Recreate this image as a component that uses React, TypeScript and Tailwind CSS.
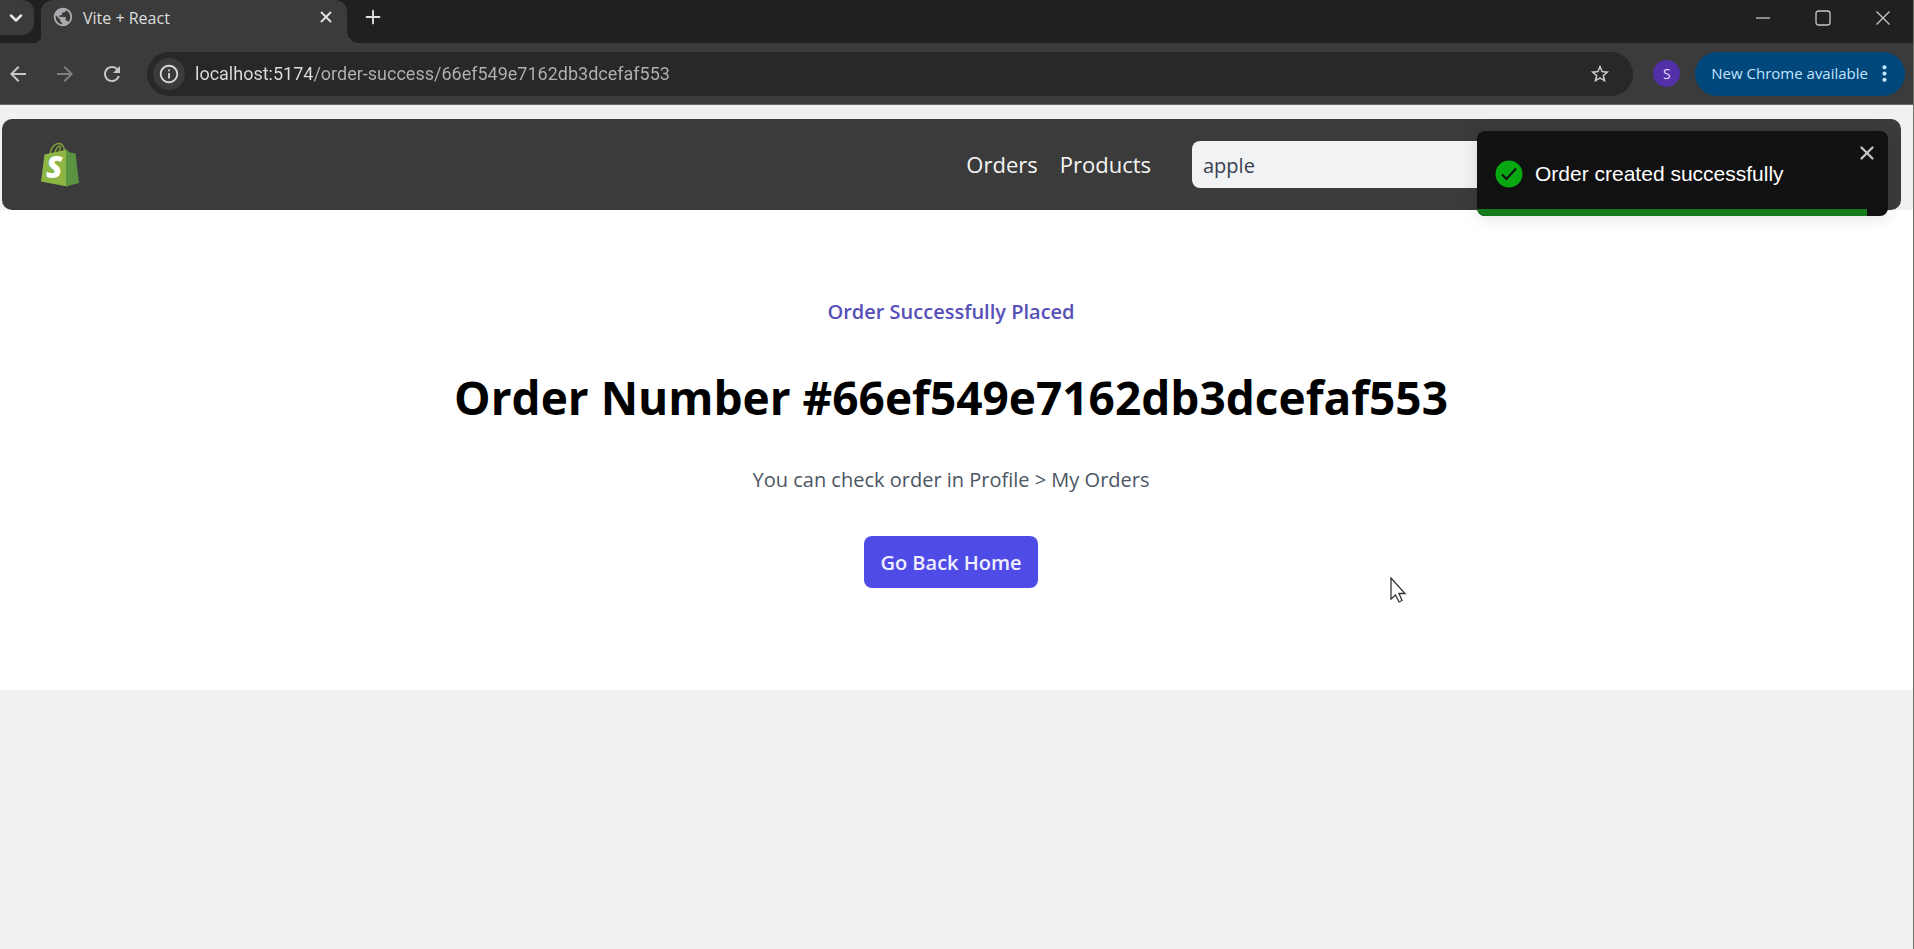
import { useState } from "react";
import { ChevronDown, Plus, X } from "lucide-react";
import {
  MdPublic,
  MdArrowBack,
  MdArrowForward,
  MdRefresh,
  MdInfoOutline,
  MdStarOutline,
  MdMoreVert,
} from "react-icons/md";

const ORDER_ID = "66ef549e7162db3dcefaf553";

function TabStrip() {
  return (
    <div className="flex h-[43px] items-stretch bg-[#1f201f]">
      <button
        aria-label="Search tabs"
        className="flex h-[35px] w-[34px] items-center justify-center rounded-br-[12px] rounded-tr-[12px] bg-[#3b3b3b] pr-[3px] text-[#e3e3e3]"
      >
        <ChevronDown className="size-[20px]" strokeWidth={3} />
      </button>
      <div className="w-[7px] bg-[radial-gradient(circle_at_0_0,#1f201f_7px,#3b3b3b_7px)] bg-[length:7px_7px] bg-bottom bg-no-repeat" />
      <div className="flex w-[306px] items-start rounded-t-[12px] bg-[#3b3b3b] pl-[11px] pr-[12px] pt-[6px]">
        <MdPublic className="size-[22px] text-[#a9abae]" />
        <span className="ml-[9px] flex-1 text-[16px] leading-[24px] text-[#dedede]">Vite + React</span>
        <button aria-label="Close tab" className="mt-[2px] text-[#e3e3e3]">
          <X className="size-[18px]" strokeWidth={2.5} />
        </button>
      </div>
      <div className="w-[12px] bg-[radial-gradient(circle_at_100%_0,#1f201f_12px,#3b3b3b_12px)] bg-[length:12px_12px] bg-bottom bg-no-repeat" />
      <button aria-label="New tab" className="ml-[3px] mt-[6px] self-start text-[#e3e3e3]">
        <Plus className="size-[22px]" strokeWidth={2} />
      </button>
      <div className="ml-auto flex h-[35px] items-center gap-[44px] pr-[22px] text-[#c8c8c8]">
        <button aria-label="Minimize">
          <svg className="size-[16px]" viewBox="0 0 16 16" stroke="currentColor" strokeWidth="1.3" fill="none">
            <path d="M1 8h14" />
          </svg>
        </button>
        <button aria-label="Maximize">
          <svg className="size-[16px]" viewBox="0 0 16 16" stroke="currentColor" strokeWidth="1.3" fill="none">
            <rect x="1" y="1" width="14" height="14" rx="2.5" />
          </svg>
        </button>
        <button aria-label="Close window">
          <svg className="size-[16px]" viewBox="0 0 16 16" stroke="currentColor" strokeWidth="1.3" fill="none">
            <path d="M1.5 1.5l13 13M14.5 1.5l-13 13" />
          </svg>
        </button>
      </div>
    </div>
  );
}

function Toolbar() {
  return (
    <div className="flex h-[62px] items-center border-b border-[#6a6a6a] bg-[#3b3b3b] pl-[6px] pr-[8px]">
      <button aria-label="Back" className="text-[#c7c7c7]">
        <MdArrowBack className="size-[24px]" />
      </button>
      <button aria-label="Forward" className="ml-[23px] text-[#7e7e7e]">
        <MdArrowForward className="size-[24px]" />
      </button>
      <button aria-label="Reload" className="ml-[23px] text-[#c7c7c7]">
        <MdRefresh className="size-[24px]" />
      </button>
      <div className="ml-[23px] flex h-[44px] flex-1 items-center rounded-full bg-[#282828] pl-[6px] pr-[22px]">
        <button aria-label="Site information" className="flex size-[32px] items-center justify-center rounded-full bg-[#3b3b3b] text-[#d8d8d8]">
          <MdInfoOutline className="size-[22px]" />
        </button>
        <input
          aria-label="Address"
          readOnly
          value={"localhost:5174/order-success/" + ORDER_ID}
          className="ml-[10px] min-w-0 flex-1 bg-[linear-gradient(90deg,#e0dedc_118px,#b4b2b0_118px)] bg-clip-text font-[Roboto,sans-serif] text-[18px] text-transparent outline-none"
        />
        <button aria-label="Bookmark this page" className="text-[#d0d0d0]">
          <MdStarOutline className="size-[22px]" />
        </button>
      </div>
      <button aria-label="Profile" className="ml-[20px] flex size-[27px] items-center justify-center rounded-full bg-[#5230a8] text-[14px] font-medium text-[#e6dcff]">
        S
      </button>
      <button className="ml-[15px] flex h-[44px] items-center rounded-full bg-[#00477c] pl-[16px] pr-[8px] text-[15px] text-[#c2e4ff]">
        New Chrome available
        <MdMoreVert className="ml-[4px] size-[25px]" />
      </button>
    </div>
  );
}

function ShopLogo() {
  return (
    <svg className="h-[45px] w-[40px]" viewBox="0 0 40 45" aria-hidden="true">
      <path d="M10 12C11 5 15 1.500 19 1.500c4 0 5 3 5.500 7M14.500 12c1-5 3-8 6-8M19.500 9.500c0-3 .5-4 1.500-5" fill="none" stroke="#7fa03c" strokeWidth="1.500" />
      <path d="M4.500 12.500L27 7.500V44.500L1 39.500z" fill="#8db543" />
      <path d="M26 7.500l4 3 5.500 1L39 41l-13 3.500z" fill="#5b9440" />
      <text x="6" y="36" fontSize="30" fontWeight="800" fontStyle="italic" fontFamily="Open Sans, sans-serif" fill="#fff">
        S
      </text>
    </svg>
  );
}

function SiteHeader({ query, onQuery }: { query: string; onQuery: (value: string) => void }) {
  return (
    <header className="ml-[2px] mr-[12px] flex h-[91px] items-center rounded-[10px] bg-[#3b3b3b] pl-[38px] pr-[40px]">
      <a href="#home" aria-label="Home">
        <ShopLogo />
      </a>
      <nav className="ml-auto flex gap-[22px] text-[22px] text-[#f5f5f5]">
        <a href="#orders">Orders</a>
        <a href="#products">Products</a>
      </nav>
      <input
        aria-label="Search products"
        value={query}
        onChange={(e) => onQuery(e.target.value)}
        className="ml-[41px] mr-[146px] h-[47px] w-[523px] rounded-[8px] bg-[#f1f2f4] px-[11px] pt-[2px] text-[20px] text-[#374151] outline-none"
      />
    </header>
  );
}

function Toast({ onClose }: { onClose: () => void }) {
  return (
    <div
      role="status"
      className="absolute right-[25px] top-[26px] flex w-[411px] flex-col overflow-hidden rounded-[8px] bg-[#111111] shadow-[0_2px_16px_rgba(0,0,0,0.12)]"
    >
      <div className="flex h-[78px] items-start pl-[18px] pr-[10px] pt-[11px]">
        <svg className="mt-[18px] size-[28px]" viewBox="0 0 28 28" aria-hidden="true">
          <circle cx="14" cy="14" r="13.500" fill="#07a811" />
          <path d="M7 14.500l4.500 4.500L21 8.500" fill="none" stroke="#111" strokeWidth="2.200" />
        </svg>
        <p className="ml-[12px] mt-[17px] flex-1 font-['Liberation_Sans',Arial,sans-serif] text-[21px] leading-[30px] text-white">
          Order created successfully
        </p>
        <button aria-label="Dismiss" onClick={onClose} className="text-[#c4c4c4]">
          <X className="size-[22px]" strokeWidth={2.5} />
        </button>
      </div>
      <div className="h-[7px] w-[95%] bg-[#147a1c]" />
    </div>
  );
}

export default function App() {
  const [query, setQuery] = useState("apple");
  const [toastOpen, setToastOpen] = useState(true);

  return (
    <div className="flex min-h-screen bg-[#f0f1f3] font-['Open_Sans','Segoe_UI',sans-serif]">
      <div className="flex min-w-0 flex-1 flex-col">
        <TabStrip />
        <Toolbar />
        <div className="relative flex flex-1 flex-col pt-[14px]">
          <SiteHeader query={query} onQuery={setQuery} />
          <main className="flex flex-col items-center bg-white pb-[102px] pr-[11px] pt-[87px] text-center">
            <p className="text-[20px] font-semibold leading-[30px] text-[#5650b8]">Order Successfully Placed</p>
            <h1 className="mt-[40px] text-[46px] font-bold leading-[60px] text-black">Order Number #{ORDER_ID}</h1>
            <p className="mt-[38px] text-[20px] leading-[30px] text-[#4b5563]">You can check order in Profile &gt; My Orders</p>
            <a href="#home" className="mt-[41px] rounded-[8px] bg-[#4f4be6] px-[16px] pb-[10px] pt-[12px] text-[20px] font-semibold leading-[30px] text-[#f0efff]">
              Go Back Home
            </a>
          </main>
          {toastOpen && <Toast onClose={() => setToastOpen(false)} />}
          <svg className="absolute left-[1390px] top-[472px] h-[26px] w-[17px]" viewBox="0 0 17 26" aria-hidden="true">
            <path d="M1 1v21l4.500-4 3.500 7 3-1.500-3-7h6z" fill="#fff" stroke="#333" strokeWidth="1.300" />
          </svg>
        </div>
      </div>
      <div className="w-px bg-[#6f706c]" />
    </div>
  );
}
